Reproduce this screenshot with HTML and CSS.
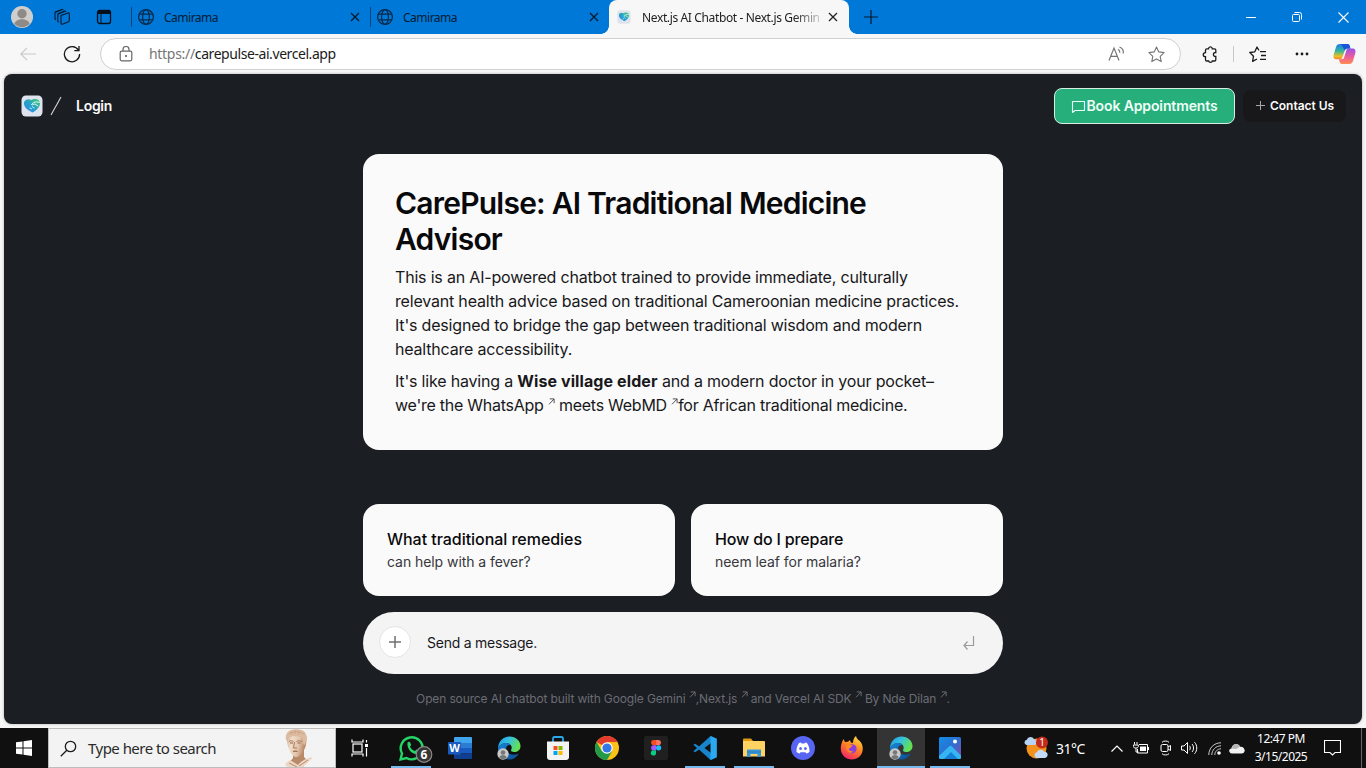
FILE: index.html
```html
<!DOCTYPE html>
<html lang="en">
<head>
<meta charset="utf-8">
<title>Next.js AI Chatbot - Next.js Gemini</title>
<link rel="stylesheet" href="styles.css">
</head>
<body>
<svg class="defs" aria-hidden="true">
  <defs>
    <linearGradient id="gTeal" x1="0" y1="1" x2="1" y2="0"><stop offset="0" stop-color="#2589e8"/><stop offset=".45" stop-color="#259fd0"/><stop offset="1" stop-color="#42cc6c"/></linearGradient>
    <linearGradient id="gEdge" x1="0" y1="0" x2="1" y2=".4"><stop offset="0" stop-color="#1e9be8"/><stop offset=".5" stop-color="#35c1e0"/><stop offset="1" stop-color="#63e052"/></linearGradient>
    <linearGradient id="gEdge2" x1="0" y1="0" x2="1" y2="1"><stop offset="0" stop-color="#1788d8"/><stop offset="1" stop-color="#0b4a91"/></linearGradient>
    <linearGradient id="gFox" x1=".8" y1="0" x2=".3" y2="1"><stop offset="0" stop-color="#ffe14a"/><stop offset=".45" stop-color="#ff8a1e"/><stop offset="1" stop-color="#f6206b"/></linearGradient>
    <linearGradient id="gCopA" x1="0" y1="0" x2="0" y2="1"><stop offset="0" stop-color="#1f7ae8"/><stop offset=".45" stop-color="#30b6a0"/><stop offset=".8" stop-color="#f0c020"/><stop offset="1" stop-color="#f08030"/></linearGradient>
    <linearGradient id="gCopB" x1="0" y1="0" x2="0" y2="1"><stop offset="0" stop-color="#9a50e8"/><stop offset=".5" stop-color="#e85aa0"/><stop offset="1" stop-color="#ff8c50"/></linearGradient>
    <linearGradient id="gPhoto" x1="0" y1="0" x2="1" y2="1"><stop offset="0" stop-color="#0f8fe8"/><stop offset=".5" stop-color="#2e6fd0"/><stop offset="1" stop-color="#8a4aa8"/></linearGradient>
    <linearGradient id="gFace" x1="0" y1="0" x2="1" y2=".3"><stop offset="0" stop-color="#c9a083"/><stop offset=".35" stop-color="#f0dccb"/><stop offset=".7" stop-color="#e3c4ab"/><stop offset="1" stop-color="#b98a6a"/></linearGradient>
    <symbol id="globe" viewBox="0 0 16 16"><g fill="none" stroke="#062a4c" stroke-width="1.2"><circle cx="8" cy="8" r="7.4"/><ellipse cx="8" cy="8" rx="3.4" ry="7.4"/><path d="M1.4 5.2h13.2M1.4 10.8h13.2"/></g></symbol>
    <symbol id="close" viewBox="0 0 10 10"><path d="M1 1l8 8M9 1L1 9" fill="none" stroke="currentColor" stroke-width="1.3"/></symbol>
    <symbol id="logo" viewBox="0 0 22 22"><rect x=".5" y=".5" width="21" height="21" rx="4.500" fill="#dfe3ee"/><path d="M11.500 17.500C10 17 9.500 16 8 15.500 5 14 2.800 11 3 7.800 3.300 4.500 7.500 3.200 10.300 5 13.500 2.800 19 4.200 19 8.200c0 3.800-3.500 7.300-7.500 9.300z" fill="url(#gTeal)"/><path d="M10.500 9.500L13 7.300c1.500-.6 3.500-.2 5.800 0M10.500 9.500c1.500.8 2.500-.4 3.500-.6l3 2.200" stroke="#e8faf4" stroke-width="1" fill="none"/><path d="M8.500 12.800l2.500 1.200M11 11.500l2.500 1.700" stroke="#e8faf4" stroke-width=".8"/></symbol>
    <symbol id="edge" viewBox="0 0 24 24"><path d="M1 13C1 5.500 6 .5 12.500 .5 19 .5 23.500 5 23.500 10c0 4.200-3 6-6.500 6-2.500 0-3.500-1-2.800-2.200C16 10.500 13 7 9.500 7 5 7 1.800 9.500 1 13z" fill="url(#gEdge)"/><path d="M1 13C2 8.800 5.500 7 9.500 7c1.500 0 3 .7 3.900 1.800C9.500 9 8.500 12 9.500 14.500c1.500 4.200 7 5.500 12.200 3C19.500 21.500 16.500 23.500 12.500 23.500 6 23.500 1 18.800 1 13z" fill="url(#gEdge2)"/><circle cx="6" cy="18" r="5.700" fill="#c9c9c9"/><circle cx="6" cy="16.500" r="2.300" fill="#777"/><path d="M2.300 21.600c.5-3.500 6.900-3.500 7.400 0-2 2-5.400 2-7.400 0z" fill="#777"/></symbol>
    <symbol id="arrow" viewBox="0 0 7 7"><path d="M1 6.300L6 1M1.800 .9H6.100V5.200" fill="none" stroke="currentColor"/></symbol>
    <symbol id="plus" viewBox="0 0 12 12"><path d="M5.500 1v9M1 5.500h9" fill="none" stroke="currentColor"/></symbol>
  </defs>
</svg>

<header class="titlebar">
  <svg class="avatar" width="22" height="22" viewBox="0 0 22 22"><circle cx="11" cy="11" r="11" fill="#d0cecc"/><circle cx="11" cy="7.700" r="4.700" fill="#8d8a88"/><path d="M3.300 18c1-6.500 14.400-6.500 15.400 0A11 11 0 0 1 3.300 18z" fill="#8d8a88"/></svg>
  <svg class="spaces" width="18" height="18" viewBox="0 0 18 18"><g fill="none" stroke="#06182c" stroke-width="1.100" stroke-linejoin="round"><path d="M8 7.500l7-2.600a1 1 0 0 1 1.300 1v6.600a1.500 1.500 0 0 1-.9 1.300l-6 2.400a1 1 0 0 1-1.400-1V7.500z"/><path d="M6 14l-1.200-.5V6.200L11.500 3.500M3 11.500l-1-.5V4.500L8.700 1.800M4.800 6.200l.8-.8 6-2.300a1 1 0 0 1 1.300.8M2 4.500l.8-.8 6-2.300a1 1 0 0 1 1.300.8"/></g></svg>
  <svg class="tabmenu" width="16" height="16" viewBox="0 0 16 16"><rect x="1.500" y="1.500" width="13" height="13" rx="2" fill="none" stroke="#06101c" stroke-width="1.300"/><path d="M1.500 5V3.500a2 2 0 0 1 2-2h9a2 2 0 0 1 2 2V5z" fill="#06101c"/><path d="M5 5v9" stroke="#06101c"/></svg>
  <div class="tab"><svg width="16" height="16"><use href="#globe"/></svg><span class="tab-name">Camirama</span><svg class="x" width="10" height="10"><use href="#close"/></svg></div>
  <div class="tab second"><svg width="16" height="16"><use href="#globe"/></svg><span class="tab-name">Camirama</span><svg class="x" width="10" height="10"><use href="#close"/></svg></div>
  <div class="tab current"><svg width="14" height="14"><use href="#logo"/></svg><span class="tab-name long">Next.js AI Chatbot - Next.js Gemin</span><svg class="x" width="10" height="10"><use href="#close"/></svg></div>
  <svg class="newtab" width="14" height="14" viewBox="0 0 14 14"><path d="M7 0v14M0 7h14" stroke="#06182c" stroke-width="1.200"/></svg>
  <div class="winbtns">
    <svg width="10" height="10" viewBox="0 0 10 10"><path d="M0 5.500h10" stroke="#fff"/></svg>
    <svg width="10" height="10" viewBox="0 0 10 10"><g fill="none" stroke="#fff"><rect x=".5" y="2.500" width="7" height="7" rx="1"/><path d="M2.500 .5h5a2 2 0 0 1 2 2v5"/></g></svg>
    <svg width="11" height="11" viewBox="0 0 11 11"><path d="M.5 .5l10 10M10.500 .5l-10 10" stroke="#fff" stroke-width="1.100"/></svg>
  </div>
</header>

<div class="toolbar">
  <svg class="back" width="16" height="14" viewBox="0 0 16 14"><path d="M16 7H1M7 .8L.8 7 7 13.200" fill="none" stroke="#c8c8c8" stroke-width="1.200"/></svg>
  <svg class="reload" width="18" height="18" viewBox="0 0 18 18"><path d="M15.500 5.200A7.600 7.600 0 1 0 16.600 9M16 1v4.700h-4.700" fill="none" stroke="#1a1a1a" stroke-width="1.300"/></svg>
  <div class="address">
    <svg class="lock" width="14" height="16" viewBox="0 0 14 16"><g fill="none" stroke="#666" stroke-width="1.200"><rect x="1.200" y="5.200" width="11.600" height="9.600" rx="1.500"/><path d="M4 5V3.500a3 3 0 0 1 6 0V5"/></g><circle cx="7" cy="10" r="1" fill="#555"/></svg>
    <span class="url"><i>https://</i>carepulse-ai.vercel.app</span>
    <svg class="read" width="17" height="16" viewBox="0 0 17 16"><path d="M1 14.500L6 2l5 12.500M2.800 10.300h6.400M10 3.200c1.500.8 2 2 1.800 3.600M11.500 1c3 1.200 4.300 3.600 3.700 6.500" fill="none" stroke="#767676" stroke-width="1.200"/></svg>
    <svg class="star" width="17" height="17" viewBox="0 0 17 17"><path d="M8.500 1l2.300 4.900 5.300.7-3.900 3.700 1 5.300-4.700-2.600-4.700 2.600 1-5.300L.9 6.600l5.300-.7z" fill="none" stroke="#767676" stroke-width="1.100" stroke-linejoin="round"/></svg>
  </div>
  <svg class="ext" width="16" height="17" viewBox="0 0 16 17"><path d="M4.800 2.800H6.500C6.600 .3 10.200 .3 10.300 2.800h2.200a1.300 1.300 0 0 1 1.300 1.300V6.500c-3.200-.3-3.200 4.300 0 4v3.200a1.300 1.300 0 0 1-1.300 1.300h-2.200c-.2 1.700-3.400 1.700-3.600 0H4.800a1.300 1.300 0 0 1-1.300-1.300v-3C.5 10.500 .5 6.900 3.500 6.700V4.100a1.300 1.300 0 0 1 1.300-1.300z" fill="none" stroke="#1b1b1b" stroke-width="1.300"/></svg>
  <i class="vline"></i>
  <svg class="fav" width="18" height="17" viewBox="0 0 18 17"><path d="M11 5.700h6M12 9.500h5M11 13.300h6M10 4.500L8 1 5.800 5.800l-5 .7 3.700 3.700-.9 5.200 4.400-2.400" fill="none" stroke="#1b1b1b" stroke-width="1.300" stroke-linejoin="round"/></svg>
  <svg class="dots" width="14" height="4" viewBox="0 0 14 4"><g fill="#1b1b1b"><circle cx="2" cy="2" r="1.400"/><circle cx="7" cy="2" r="1.400"/><circle cx="12" cy="2" r="1.400"/></g></svg>
  <svg class="copilot" width="23" height="22" viewBox="0 0 23 22"><path d="M7 1h7.500c1.500 0 2 1 2.300 2.300l.6 2.200h-3c-1.500 0-2.200.8-2.600 2L9.500 14c-.5 1.500-1.200 2.300-2.800 2.300H3.500C.8 16.300 0 14.500 .6 12L3 4c.6-2 1.800-3 4-3z" fill="url(#gCopA)"/><path d="M16 21H9c-1.500 0-2-1-2.400-2.300L6 16.300h2.500c1.700 0 2.400-.8 2.800-2.200l2-6.600c.4-1.400 1.200-2 2.700-2h3.500c2.700 0 3.400 2 2.800 4.500L20 18c-.6 2-1.800 3-4 3z" fill="url(#gCopB)"/><path d="M8 1h6.500c1.500 0 2 1 2.300 2.300l.6 2.200h-3c-1.500 0-2.200.8-2.600 2z" fill="#1b55d8"/></svg>
</div>

<div class="viewport">
<div class="page">
  <nav class="nav">
    <svg class="logo" width="22" height="22"><use href="#logo"/></svg>
    <svg class="slash" width="12" height="20" viewBox="0 0 12 20"><path d="M1 19L11 1" stroke="#d4d4d8" stroke-width="1.100"/></svg>
    <a class="login">Login</a>
    <a class="book"><svg width="15" height="15" viewBox="0 0 15 15"><path d="M1.500 13.500V2.500h12v9H4z" fill="none" stroke="#e8fff5" stroke-width="1.100" stroke-linejoin="round"/></svg><span>Book Appointments</span></a>
    <a class="contact"><svg width="12" height="12"><use href="#plus"/></svg><span>Contact Us</span></a>
  </nav>
  <main class="column">
    <section class="intro">
      <h1>CarePulse: AI Traditional Medicine<br>Advisor</h1>
      <p>This is an AI-powered chatbot trained to provide immediate, culturally<br>relevant health advice based on traditional Cameroonian medicine practices.<br>It's designed to bridge the gap between traditional wisdom and modern<br>healthcare accessibility.</p>
      <p>It's like having a <b>Wise village elder</b> and a modern doctor in your pocket–<br><span class="links">we're the WhatsApp <svg class="ar" width="7" height="7"><use href="#arrow"/></svg> meets WebMD <svg class="ar" width="7" height="7"><use href="#arrow"/></svg>for African traditional medicine.</span></p>
    </section>
    <section class="examples">
      <div class="card"><strong>What traditional remedies</strong><span>can help with a fever?</span></div>
      <div class="card"><strong class="short">How do I prepare</strong><span>neem leaf for malaria?</span></div>
    </section>
    <form class="prompt">
      <span class="add"><svg width="16" height="16" viewBox="0 0 16 16"><path d="M8 2v12M2 8h12" stroke="#707070" stroke-width="1.500"/></svg></span>
      <span class="placeholder">Send a message.</span>
      <svg class="enter" width="12" height="14" viewBox="0 0 12 14"><path d="M10.500 0v9.500H1M4.500 5.500L1 9.500l3.500 4" fill="none" stroke="#9a9a9a" stroke-width="1.200"/></svg>
    </form>
    <p class="foot">Open source AI chatbot built with Google Gemini <svg class="ar" width="7" height="7"><use href="#arrow"/></svg>,Next.js <svg class="ar" width="7" height="7"><use href="#arrow"/></svg> and Vercel AI SDK <svg class="ar" width="7" height="7"><use href="#arrow"/></svg> By Nde Dilan <svg class="ar" width="7" height="7"><use href="#arrow"/></svg>.</p>
  </main>
</div>
</div>

<footer class="taskbar">
  <div class="start"><svg width="16" height="16" viewBox="0 0 16 16"><path d="M0 2.300l6.500-.9v6.100H0zM7.500 1.200L16 0v7.500H7.500zM0 8.500h6.500v6.100L0 13.700zM7.500 8.500H16V16l-8.500-1.200z" fill="#fff"/></svg></div>
  <div class="search">
    <svg width="17" height="17" viewBox="0 0 17 17"><circle cx="10.500" cy="6.500" r="5.200" fill="none" stroke="#1c1c1c" stroke-width="1.300"/><path d="M6.800 10.200L.8 16.200" stroke="#1c1c1c" stroke-width="1.300"/></svg>
    <span>Type here to search</span>
    <svg class="bust" width="30" height="38" viewBox="0 0 30 38"><path d="M9 24v5l-5 6 1 3h14l4-7-3-3v-8z" fill="#b98a68"/><path d="M2.500 9.500C2 3.500 6 .8 12 .6 19 .4 23 3.500 22.500 10c0 5-1 9-3 12-1.500 3.500-4.500 6-7.500 6-3.500-.5-5.500-4-7-8-1.500-3.500-2-7-2.500-10.500z" fill="url(#gFace)"/><path d="M2 11C.8 4 5 .3 12 .3S23.500 4 22.500 12l-1.800 4-1.500-1-.5-6C14 6.500 8 7 4.500 8.500L3.500 12z" fill="#dcbba0"/><path d="M5 5c4-3 10-3 15 0M7 2.500l1 3M11 1.500v3.500M15 2l-.5 3.500" stroke="#c9a185" stroke-width=".8" fill="none"/><path d="M5 12.500c1.500-1 3-.8 4.500 0M12.500 12.500c2-1 4-.8 5.500 0M10.500 13l-1 6h3.500" stroke="#a67a5c" fill="none"/><path d="M6 14h3M13.500 14h3M9 22.500c1.500-.6 3-.6 4.500 0" stroke="#94674a" stroke-width="1.200" fill="none"/><path d="M1 35l5-4 8 5c3-4 7-6 13-8l1 1.500-9 8.500H3z" fill="#ecd6c4"/><path d="M5 34l8 4M15 37l9-6" stroke="#b98a6a" fill="none"/></svg>
  </div>
  <div class="cell view"><svg width="18" height="18" viewBox="0 0 18 18"><g fill="none" stroke="#fff" stroke-width="1.200"><rect x="2" y="5" width="9" height="8"/><path d="M1 .5v2.500h11V.5M1 17.500V15h11v2.500M15.500 1v2.500M15.500 9v8.500"/></g><rect x="14" y="5" width="3" height="3" fill="#fff"/></svg></div>
  <div class="cell run wa"><svg width="34" height="30" viewBox="0 0 34 30"><path d="M1.500 24.500L3 18.500A11 11 0 1 1 7.500 23z" fill="#101010" stroke="#25d366" stroke-width="2.400"/><path d="M8.500 7.500c1-1.300 2.300-1 2.700 0l.9 2.200c.2.700-1 1.600-1 2 1 2.200 2.700 3.500 4.700 4.200.7 0 1.400-1.600 2-1.500l2.300 1.100c1 .6-.5 3.300-2.500 3.500C13 19.500 7.500 13.500 8.500 7.500z" fill="#25d366"/><circle cx="25" cy="19.500" r="7.800" fill="#333" stroke="#888" stroke-width="1.200"/><text x="25" y="24" text-anchor="middle" class="badge">6</text></svg></div>
  <div class="cell"><svg width="24" height="22" viewBox="0 0 24 22"><path d="M6 1a1 1 0 0 1 1-1h16a1 1 0 0 1 1 1v5H6z" fill="#41a5ee"/><path d="M6 6h18v5.300H6z" fill="#2b7cd3"/><path d="M6 11h18v5.500H6z" fill="#185abd"/><path d="M6 16.500h18V21a1 1 0 0 1-1 1H7a1 1 0 0 1-1-1z" fill="#103f91"/><rect y="5" width="13" height="12.500" rx="1" fill="#185abd"/><text x="6.500" y="15" text-anchor="middle" class="word">W</text></svg></div>
  <div class="cell"><svg width="24" height="24"><use href="#edge"/></svg></div>
  <div class="cell"><svg width="24" height="24" viewBox="0 0 24 24"><path d="M7 6V2.500A1.500 1.500 0 0 1 8.500 1h7A1.500 1.500 0 0 1 17 2.500V6" fill="none" stroke="#28a8e8" stroke-width="1.800"/><path d="M1 5.500h22V21a3 3 0 0 1-3 3H4a3 3 0 0 1-3-3z" fill="#f3f3f3"/><path d="M7.500 10h4v4h-4z" fill="#f25022"/><path d="M12.500 10h4v4h-4z" fill="#7fba00"/><path d="M7.500 15h4v4h-4z" fill="#00a4ef"/><path d="M12.500 15h4v4h-4z" fill="#ffb900"/></svg></div>
  <div class="cell"><svg width="24" height="24" viewBox="0 0 24 24"><circle cx="12" cy="12" r="12" fill="#fbc116"/><path d="M12 12L1.600 6A12 12 0 0 1 22.400 6H12z" fill="#e33b2e"/><path d="M1.600 6A12 12 0 0 0 12 24l5.200-9-5.200 2-5.200-2z" fill="#229a4a"/><circle cx="12" cy="12" r="5.800" fill="#fff"/><circle cx="12" cy="12" r="4.600" fill="#3478e8"/></svg></div>
  <div class="cell"><svg width="24" height="24" viewBox="0 0 24 24"><rect width="24" height="24" rx="2" fill="#202020"/><path d="M12 4H9.700a2.600 2.600 0 0 0 0 5.200H12z" fill="#f24e1e"/><path d="M12 4h2.300a2.600 2.600 0 0 1 0 5.200H12z" fill="#ff7262"/><path d="M12 9.200H9.700a2.600 2.600 0 0 0 0 5.200H12z" fill="#a259ff"/><circle cx="14.600" cy="11.800" r="2.600" fill="#1abcfe"/><path d="M12 14.400H9.700a2.600 2.600 0 1 0 2.300 2.600z" fill="#0acf83"/></svg></div>
  <div class="cell run"><svg width="24" height="24" viewBox="0 0 24 24"><path d="M17.500 0L6 10.500 2.300 7.700 .3 8.700 4 12 .3 15.300l2 1L6 13.500 17.500 24l6.200-2.700V2.700zM18 7v10l-6.500-5z" fill="#1784cc" fill-rule="evenodd"/><path d="M17.500 0l6.200 2.700v18.600L17.500 24z" fill="#2ba8f0"/></svg></div>
  <div class="cell run"><svg width="22" height="20" viewBox="0 0 22 20"><path d="M0 1.500A1 1 0 0 1 1 .5h7l2 2.500H0z" fill="#e29a10"/><path d="M0 3h21a1 1 0 0 1 1 1v14.500H0z" fill="#ffd262"/><path d="M4 11.500h14V19h-3.500v-3h-7v3H4z" fill="#3b96d8"/><path d="M4 14h14" stroke="#2878b8" stroke-width=".8"/></svg></div>
  <div class="cell"><svg width="24" height="24" viewBox="0 0 24 24"><circle cx="12" cy="12" r="12" fill="#5865f2"/><path d="M8 7l2-.6.5 1h3l.5-1 2 .6c2 2.800 2.700 5.800 2.500 9-1 .8-2.200 1.300-3.200 1.500l-.8-1.300h-5l-.8 1.300c-1-.2-2.200-.7-3.200-1.500C5.300 12.800 6 9.800 8 7z" fill="#fff"/><ellipse cx="9.600" cy="12.500" rx="1.400" ry="1.600" fill="#5865f2"/><ellipse cx="14.400" cy="12.500" rx="1.400" ry="1.600" fill="#5865f2"/></svg></div>
  <div class="cell"><svg width="24" height="24" viewBox="0 0 24 24"><path d="M2.500 5L3.500 3l1.500 3 3-.3L10 4l.8 2.500L13 7c0-3 1-5.500 3-7 .5 3 3 4 5 6.500 3 5 2 10.500-1.500 14-4 4-11.500 4-15.500 0C0 16.500 0 10.500 2.500 5z" fill="url(#gFox)"/><circle cx="12" cy="12.800" r="4.600" fill="#8a3fe0"/><path d="M6 9.500c3-2 5-.5 7 0-2 1-2 2.500-4 3-1 1.500 2 3.500 4.500 2.500C11 19 5.500 16 6 9.500z" fill="#ff8a1e"/></svg></div>
  <div class="cell run active"><svg width="24" height="24"><use href="#edge"/></svg></div>
  <div class="cell run"><svg width="22" height="22" viewBox="0 0 22 22"><rect width="22" height="22" rx="1.500" fill="url(#gPhoto)"/><path d="M0 19L10 9.500c1-1 2-1 3 0l9 9V20.500a1.500 1.500 0 0 1-1.500 1.500h-19A1.500 1.500 0 0 1 0 20.500z" fill="#35b6f2"/><path d="M5 22l7-7 7 7z" fill="#1580d8"/><circle cx="16" cy="4.500" r="2" fill="#fff"/></svg></div>
  <div class="tray">
    <svg class="weather" width="25" height="24" viewBox="0 0 25 24"><circle cx="12.500" cy="12.500" r="10" fill="#f2921d"/><path d="M2.500 9a2.700 2.700 0 0 1 .4-5.300C4 .5 8.500 .2 10 3.200c3-.3 4 5.800 0 5.800z" fill="#b8d4f5"/><path d="M12.500 22a3 3 0 0 1 .5-5.800c1-3 6-3.300 7.300-.4 4.500-.2 4.500 6.200 0 6.200z" fill="#c4dcf8"/><circle cx="18" cy="6.500" r="6" fill="#c42b1c"/><text x="18" y="10" text-anchor="middle" class="one">1</text></svg>
    <span class="temp">31°C</span>
    <svg class="up" width="12" height="7" viewBox="0 0 12 7"><path d="M.5 6.500L6 1l5.500 5.500" fill="none" stroke="#fff" stroke-width="1.200"/></svg>
    <svg class="bat" width="16" height="12" viewBox="0 0 16 12"><path d="M1.500 0v2.500M4 0v2.500M.3 3h5v1.500c0 2-5 2-5 0zM3 6v4h2.500" fill="none" stroke="#fff"/><path d="M6 2.500h8.500v8.500H4.500V7" fill="none" stroke="#fff"/><path d="M7 4.500h6v4.500H7zM15 5h1v3h-1z" fill="#fff"/></svg>
    <svg class="meet" width="12" height="16" viewBox="0 0 12 16"><g fill="none" stroke="#fff"><rect x="1" y="4.500" width="7" height="7" rx="1.500"/><path d="M8 7l2.500-1.500v5L8 9M2 2.300c1.500-1.700 5.500-1.700 7 0M2 13.700c1.500 1.700 5.500 1.700 7 0"/></g></svg>
    <svg class="vol" width="17" height="14" viewBox="0 0 17 14"><path d="M.5 5h2.500L6.500 1.500v11L3 9H.5zM8.500 4.800c1 1.200 1 3.200 0 4.400M11 3c2 2.200 2 5.800 0 8M13.500 1.200c3 3.200 3 8.400 0 11.600" fill="none" stroke="#fff"/></svg>
    <svg class="wifi" width="13" height="13" viewBox="0 0 13 13"><g fill="none" stroke="#ccc"><path d="M.8 13C.8 6 6 .8 13 .8M3.800 13c0-5 4-9.200 9.200-9.200M6.800 13c0-3.500 2.700-6.200 6.200-6.200"/></g><circle cx="11" cy="11" r="1.800" fill="#fff"/></svg>
    <svg class="cloud" width="16" height="11" viewBox="0 0 16 11"><path d="M3 10.500C-.8 10-.5 5.500 2.500 5.500 3 .5 9.500-.8 11 3.800c5-.8 6.500 6.200 2 6.700z" fill="#f2f2f2"/><path d="M2.500 5.500C3 .5 9.500-.8 11 3.800L7 6z" fill="#b5b5b5"/></svg>
    <div class="clock"><span>12:47 PM</span><span>3/15/2025</span></div>
    <svg class="note" width="17" height="16" viewBox="0 0 17 16"><path d="M.5 .5h16v12H11L8.500 15 6 12.500H.5z" fill="none" stroke="#fff" stroke-width="1.100"/></svg>
    <i class="peek"></i>
  </div>
</footer>
</body>
</html>
```
FILE: styles.css
```css
* { box-sizing: border-box; }
body { margin: 0; width: 1366px; height: 768px; display: flex; flex-direction: column; overflow: hidden; background: #f7f7f7; font-family: "Noto Sans", "Open Sans", sans-serif; }
svg { flex: none; display: block; }
.defs { position: absolute; width: 0; height: 0; }

.titlebar { height: 34px; flex: none; background: #0078d7; display: flex; align-items: center; color: #06182c; }
.avatar { margin-left: 11px; }
.spaces { margin-left: 20px; }
.tabmenu { margin-left: 25px; margin-right: 19px; }
.tab { width: 239px; height: 20px; border-left: 1px solid #06447a; display: flex; align-items: center; padding: 0 10px 0 6px; font-size: 12px; }
.tab-name { margin-left: 10px; flex: 1; white-space: nowrap; color: #031b33; letter-spacing: -.5px; }
.tab .x { color: #06182c; }
.tab.current { position: relative; width: 240px; height: 34px; border: 0; background: #f7f7f7; border-radius: 8px 8px 0 0; padding: 0 11px 0 8px; }
.tab.current::before, .tab.current::after { content: ""; position: absolute; bottom: 0; width: 8px; height: 8px; }
.tab.current::before { left: -8px; background: radial-gradient(circle at 0 0, #0078d7 7.5px, #f7f7f7 8px); }
.tab.current::after { right: -8px; background: radial-gradient(circle at 100% 0, #0078d7 7.5px, #f7f7f7 8px); }
.tab.current .x { color: #222; margin-left: 8px; }
.tab-name.long { margin-left: 11px; letter-spacing: -.37px; color: #222; -webkit-mask-image: linear-gradient(90deg, #000 85%, rgba(0,0,0,.2)); mask-image: linear-gradient(90deg, #000 85%, rgba(0,0,0,.2)); }
.newtab { margin-left: 15px; }
.winbtns { margin-left: auto; display: flex; align-items: center; gap: 36px; padding-right: 17px; }

.toolbar { height: 40px; flex: none; display: flex; align-items: center; }
.back { margin-left: 20px; }
.reload { margin-left: 27px; }
.address { width: 1081px; height: 32px; margin-left: 19px; background: #fff; border: 1px solid #d0d0d0; border-radius: 16px; display: flex; align-items: center; padding-left: 18px; padding-right: 15.5px; font-size: 14px; }
.url { margin-left: 16px; flex: 1; color: #1b1b1b; letter-spacing: -.43px; padding-bottom: 1px; }
.url i { font-style: normal; color: #767676; letter-spacing: -.3px; }
.star { margin-left: 23px; }
.ext { margin-left: 20.5px; }
.vline { width: 1px; height: 16px; margin-left: 15.5px; background: #c8c8c8; }
.fav { margin-left: 15px; }
.dots { margin-left: 28px; }
.copilot { margin-left: 24px; }

.viewport { height: 654px; flex: none; padding: 0 4px 4px; }
.page { height: 650px; border-radius: 8px; background: #1b1e23; box-shadow: 0 0 3px #aaa; font-family: Inter, "Liberation Sans", sans-serif; color: #18181b; }
.nav { height: 64px; display: flex; align-items: center; padding: 0 16px 0 17px; color: #fafafa; }
.slash { margin-left: 7px; }
.login { margin-left: 14px; padding-bottom: 1px; font-size: 14px; font-weight: 600; letter-spacing: -.28px; }
.book { margin-left: auto; width: 181px; height: 36px; display: flex; align-items: center; justify-content: center; background: #26ae7b; border: 1px solid #d8eee5; border-radius: 8px; font-size: 14px; font-weight: 600; letter-spacing: -.12px; color: #f0fff8; }
.book span, .contact span { padding-bottom: 1px; }
.contact { margin-left: 8px; width: 103px; height: 32px; display: flex; align-items: center; padding-left: 12px; gap: 3px; background: #18181b; border-radius: 8px; font-size: 12px; font-weight: 600; letter-spacing: -.03px; }
.contact svg { color: #a6a6a6; }

.column { width: 640px; margin: 16px auto 0; }
.intro { height: 296px; background: #fafafa; border-radius: 16px; padding: 31px 32px; white-space: nowrap; }
.intro h1 { margin: 0 0 8px; font-size: 30px; line-height: 36px; font-weight: 600; letter-spacing: -.78px; color: #09090b; }
.intro p { margin: 0 0 8px; font-size: 16px; line-height: 24px; letter-spacing: -.188px; }
.intro b { letter-spacing: .1px; }
.intro .links { letter-spacing: -.26px; }
.ar { display: inline-block; vertical-align: 6px; color: #52525b; }
.examples { margin-top: 54px; display: grid; grid-template-columns: 1fr 1fr; gap: 16px; }
.card { height: 92px; border-radius: 16px; background: #fafafa; padding: 23px 24px; font-size: 14px; line-height: 20px; letter-spacing: -.06px; display: flex; flex-direction: column; align-items: flex-start; gap: 1px; color: #37373c; }
.card strong { font-size: 16px; line-height: 24px; font-weight: 500; letter-spacing: -.04px; color: #09090b; }
.card .short { letter-spacing: -.16px; }
.prompt { height: 62px; margin-top: 16px; border-radius: 31px; background: #f4f4f4; display: flex; align-items: center; padding: 0 28px 0 16px; font-size: 14px; }
.add { width: 32px; height: 32px; border-radius: 50%; background: #fff; border: 1px solid #e4e4e7; display: grid; place-items: center; margin-top: -2px; }
.placeholder { margin-left: 16px; padding-bottom: 1px; flex: 1; letter-spacing: -.24px; }
.foot { margin: 17px 0 0; text-align: center; white-space: nowrap; font-size: 12px; line-height: 16px; letter-spacing: -.135px; color: #6c6c74; }
.foot .ar { vertical-align: 5px; color: #6c6c74; }

.taskbar { height: 40px; flex: none; background: #101010; display: flex; color: #fff; }
.start { width: 48px; display: grid; place-items: center; }
.search { width: 288px; border: 1px solid #bdbdbd; background: #f3f3f3; color: #2b2b2b; display: flex; align-items: center; padding-left: 11px; font-size: 15px; letter-spacing: -.53px; }
.search span { margin-left: 11px; }
.bust { margin-left: auto; margin-right: 21px; }
.cell { width: 48px; margin-right: 1px; position: relative; display: grid; place-items: center; }
.cell.view { margin-right: 3px; }
.cell.run::after { content: ""; position: absolute; left: 4px; right: 4px; bottom: 0; height: 2px; background: #76b9ed; }
.cell.active { background: #343434; }
.cell.active::after { left: 0; right: 0; }
.wa svg { margin: 4px 0 0 9px; }
.badge { font: bold 12px "Noto Sans", sans-serif; letter-spacing: 0; fill: #fff; }
.word { font: bold 11px "Noto Sans", sans-serif; fill: #fff; }
.one { font: 10px "Noto Sans", sans-serif; fill: #fff; }
.tray { margin-left: auto; width: 342px; display: flex; align-items: center; }
.temp { margin-left: 7px; width: 30px; font-size: 14px; letter-spacing: -.5px; }
.up { margin-left: 25px; }
.bat { margin-left: 10px; }
.meet { margin-left: 11px; }
.vol { margin-left: 9px; }
.wifi { margin-left: 10px; }
.cloud { margin-left: 8px; }
.clock { width: 56px; margin-left: 8px; display: flex; flex-direction: column; align-items: center; font-size: 12px; line-height: 18px; letter-spacing: -.5px; white-space: nowrap; }
.note { margin-left: 15px; }
.peek { width: 1px; height: 40px; margin-left: auto; margin-right: 4px; background: #666; }
```
